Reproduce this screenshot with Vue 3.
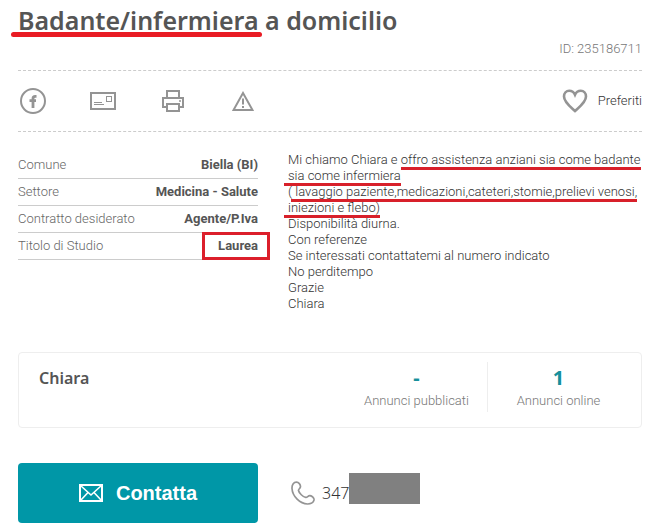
<script setup>
const details = [
  { label: 'Comune', value: 'Biella (BI)' },
  { label: 'Settore', value: 'Medicina - Salute' },
  { label: 'Contratto desiderato', value: 'Agente/P.Iva' },
  { label: 'Titolo di Studio', value: 'Laurea', boxed: true },
]
const closing = [
  'Disponibilità diurna.',
  'Con referenze',
  'Se interessati contattatemi al numero indicato',
  'No perditempo',
  'Grazie',
  'Chiara',
]
const stats = [
  { value: '-', label: 'Annunci pubblicati' },
  { value: '1', label: 'Annunci online' },
]
</script>

<template>
  <main class="ad">
    <h1 class="title"><span class="title-mark">Badante/infermiera</span> a domicilio</h1>
    <p class="ad-id">ID: 235186711</p>

    <div class="toolbar">
      <button class="tool" type="button" aria-label="Facebook">
        <svg width="26" height="26" viewBox="0 0 26 26" fill="none" stroke="#949494">
          <circle cx="13" cy="13" r="12" stroke-width="2" />
          <path d="M16.5 8.3h-1.3q-2.2 0-2.2 2.2V20M9.5 12.7h6.5" stroke-width="2.8" />
        </svg>
      </button>
      <button class="tool" type="button" aria-label="Email">
        <svg width="26" height="18" viewBox="0 0 26 18" fill="none" stroke="#949494">
          <rect x="1" y="1" width="24" height="16" stroke-width="2" />
          <rect x="16.5" y="4.5" width="5" height="5" />
          <path d="M4 10.5h8M4 12.5h10" />
        </svg>
      </button>
      <button class="tool" type="button" aria-label="Stampa">
        <svg width="22" height="22" viewBox="0 0 22 22" fill="none" stroke="#949494" stroke-width="2">
          <path d="M5 8V1h12v7M5 17H1V8h20v9h-4" />
          <path d="M5 14h12v7H5z" />
          <path d="M17 11h2" stroke-width="1.5" />
        </svg>
      </button>
      <button class="tool" type="button" aria-label="Segnala">
        <svg width="22" height="20" viewBox="0 0 22 20" fill="none" stroke="#949494" stroke-width="2">
          <path d="M11 2 20.5 19H1.5z" />
          <path d="M11 7.5v6M11 15v2" />
        </svg>
      </button>
      <button class="favorite" type="button">
        <svg width="26" height="24" viewBox="0 0 26 24" fill="none" stroke="#949494" stroke-width="2.6">
          <path d="M13 22C10 19 2 13.5 2 7.5 2 4 4.3 1.7 7.2 1.7c2.8 0 4.8 1.6 5.8 4 1-2.4 3-4 5.8-4C21.7 1.7 24 4 24 7.5 24 13.5 16 19 13 22z" />
        </svg>
        Preferiti
      </button>
    </div>

    <div class="content">
      <dl class="details">
        <div v-for="row in details" :key="row.label" class="detail">
          <dt>{{ row.label }}</dt>
          <dd :class="{ boxed: row.boxed }">{{ row.value }}</dd>
        </div>
      </dl>
      <div class="description">
        <p>Mi chiamo Chiara e <span class="mark">offro assistenza anziani sia come badante</span></p>
        <p><span class="mark lead">sia come infermiera</span></p>
        <p>( <span class="mark lead">lavaggio paziente,medicazioni,cateteri,stomie,prelievi venosi,</span></p>
        <p><span class="mark lead">iniezioni e flebo)</span></p>
        <p v-for="line in closing" :key="line">{{ line }}</p>
      </div>
    </div>

    <section class="seller">
      <h2>Chiara</h2>
      <div v-for="stat in stats" :key="stat.label" class="stat">
        <strong>{{ stat.value }}</strong>
        <span>{{ stat.label }}</span>
      </div>
    </section>

    <div class="actions">
      <button class="contact" type="button">
        <svg width="24" height="18" viewBox="0 0 24 18" fill="none" stroke="#fff" stroke-width="2">
          <rect x="1" y="1" width="22" height="16" />
          <path d="M1.5 1.5 12 11 22.5 1.5M1.5 16.5 9 8.5M22.5 16.5 15 8.5" stroke-width="1.6" />
        </svg>
        Contatta
      </button>
      <div class="phone">
        <svg width="24" height="24" viewBox="0 0 24 24" fill="none" stroke="#949494" stroke-width="1.7" stroke-linejoin="round">
          <path d="M5.5 1.2C2.5 1.2.8 4 1 7.5c.5 8 8 15.3 15.500 15.500 3 .1 6-1.500 6.500-4 .3-2-2-4-4-4.300-2-.2-2.600 2-4.300 1.700C12 16 8 12 7.500 9.500 7.300 8 9.500 7.500 9.500 5.500 9.500 3.500 7.800 1.200 5.500 1.200z" />
        </svg>
        <span>347</span>
        <span class="redacted"></span>
      </div>
    </div>
  </main>
</template>

<style>
body {
  margin: 0;
  background: #fff;
}
</style>

<style scoped>
.ad {
  padding: 4px 8px 6px 18px;
  color: #333;
  font-family: Roboto, "Liberation Sans", sans-serif;
  font-size: 13px;
  font-weight: 300;
  line-height: 16px;
}
h1, h2, p, dl, dd {
  margin: 0;
}
button {
  padding: 0;
  border: 0;
  background: none;
  color: inherit;
  font: inherit;
  cursor: pointer;
}
svg {
  display: block;
  flex: none;
}
.title {
  color: #555;
  font-family: "Noto Sans", sans-serif;
  font-size: 25px;
  font-weight: 600;
  line-height: 32px;
}
.title-mark {
  position: relative;
}
.title-mark::after {
  content: "";
  position: absolute;
  left: -7px;
  right: -3px;
  bottom: 0;
  height: 5px;
  border-radius: 3px;
  background: #e91c24;
}
.ad-id {
  padding: 5px 0 13px;
  color: #777;
  text-align: right;
}
.toolbar {
  display: flex;
  align-items: center;
  height: 60px;
  border-top: 1px dashed #ccc;
  border-bottom: 1px dashed #ccc;
}
.tool {
  display: grid;
  place-items: center;
  width: 30px;
  height: 30px;
  margin-right: 40px;
}
.favorite {
  display: flex;
  align-items: center;
  gap: 10px;
  margin-left: auto;
}
.content {
  display: flex;
  gap: 30px;
  padding-top: 20px;
}
.details {
  flex: 0 0 240px;
}
.detail {
  display: flex;
  justify-content: space-between;
  align-items: center;
  height: 26px;
  border-bottom: 1px solid #ccc;
}
.detail dt {
  color: #666;
}
.detail dd {
  color: #555;
  font-weight: 700;
}
.detail .boxed {
  margin-right: -12px;
  padding: 3px 9px 3px 13px;
  border: 3px solid #dc1f2b;
}
.description {
  flex: 1;
  white-space: nowrap;
}
.mark {
  border-bottom: 3px solid #d8202a;
}
.lead {
  margin-left: -4px;
  padding-left: 4px;
}
.seller {
  display: flex;
  align-items: center;
  margin-top: 40px;
  padding: 9px 12px 15px 20px;
  border: 1px solid #eee;
  border-radius: 4px;
}
.seller h2 {
  flex: 1;
  align-self: start;
  padding-top: 4px;
  color: #555;
  font-family: "Noto Sans", sans-serif;
  font-size: 16px;
  font-weight: 600;
  line-height: 24px;
}
.stat {
  display: flex;
  flex-direction: column;
  gap: 3px;
  width: 141px;
  padding: 3px 0;
  color: #777;
  text-align: center;
}
.stat + .stat {
  border-left: 1px solid #eee;
}
.stat strong {
  color: #16909c;
  font-family: "Noto Sans", sans-serif;
  font-size: 20px;
  font-weight: 700;
  line-height: 25px;
}
.actions {
  display: flex;
  align-items: center;
  gap: 33px;
  margin-top: 35px;
}
.contact {
  display: flex;
  align-items: center;
  justify-content: center;
  gap: 13px;
  width: 240px;
  height: 60px;
  border-radius: 4px;
  background: #0097a7;
  color: #fff;
  font-family: "Liberation Sans", sans-serif;
  font-size: 20px;
  font-weight: 700;
}
.phone {
  display: flex;
  align-items: center;
  font-family: "Noto Sans", sans-serif;
  font-size: 16px;
}
.phone svg {
  margin-right: 7px;
}
.redacted {
  width: 71px;
  height: 31px;
  margin-bottom: 9px;
  background: #808080;
}
</style>
